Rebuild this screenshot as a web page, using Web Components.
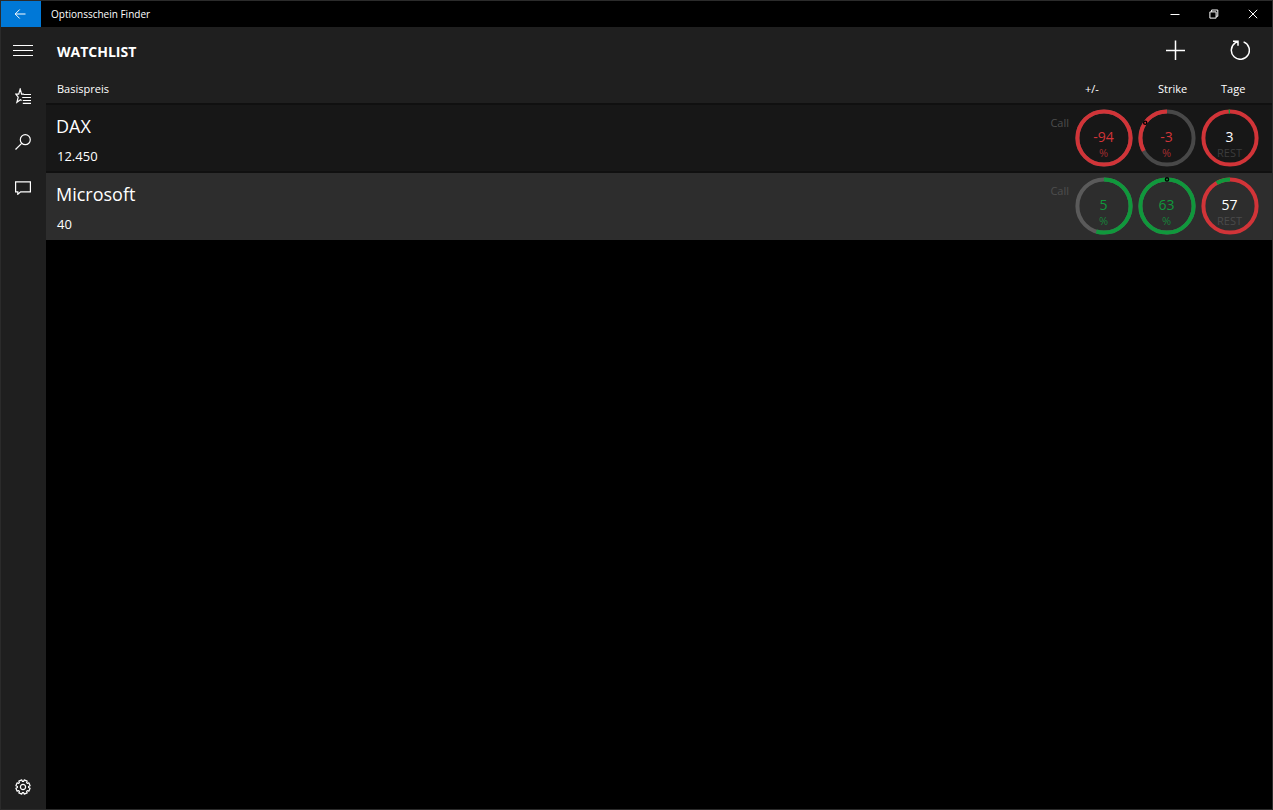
<!DOCTYPE html>
<html lang="de">
<head>
<meta charset="utf-8">
<title>Optionsschein Finder</title>
<style>
  html, body { margin: 0; height: 100%; background: #000; }
  body { font-family: "Open Sans", "Noto Sans", sans-serif; color: #fff; }
</style>
</head>
<body>
<finder-app>
  <title-bar slot="title">Optionsschein Finder</title-bar>
  <nav-pane slot="nav"></nav-pane>
  <page-header slot="main">Watchlist</page-header>
  <watch-list slot="main"></watch-list>
</finder-app>

<script>
const BUTTON = `
  *, *::before { box-sizing: border-box; }
  button { margin: 0; padding: 0; border: 0; background: none; color: inherit; font: inherit;
    display: flex; align-items: center; justify-content: center; }
  svg { display: block; fill: none; stroke: currentColor; }
`;

function define(name, html, setup) {
  const template = document.createElement('template');
  template.innerHTML = html;
  customElements.define(name, class extends HTMLElement {
    constructor() {
      super();
      this.attachShadow({ mode: 'open' }).append(template.content.cloneNode(true));
    }
    connectedCallback() { if (setup) setup(this, this.shadowRoot); }
  });
}

define('finder-app', `
  <style>
    :host { box-sizing: border-box; min-height: 100vh; display: grid;
      grid-template: auto 1fr / 45px 1fr; border: 1px solid #2b2b2b; background: #000; }
    ::slotted([slot="title"]) { grid-column: 1 / -1; }
    main { min-width: 0; }
  </style>
  <slot name="title"></slot>
  <slot name="nav"></slot>
  <main><slot name="main"></slot></main>
`);

define('title-bar', `
  <style>${BUTTON}
    :host { display: flex; align-items: stretch; height: 26px; background: #000; }
    .back { width: 40px; padding-right: 2px; background: #0078d7; }
    .name { flex: 1; padding-left: 10px; font-size: 10px; line-height: 26px; }
    .win { width: 39px; }
  </style>
  <button class="back" aria-label="Zurück"><svg width="12" height="12" viewBox="0 0 12 12"><path d="M11.5 6H1.2M5.7 1.5L1.2 6l4.5 4.5"/></svg></button>
  <span class="name"><slot></slot></span>
  <button class="win" aria-label="Minimieren"><svg width="10" height="10" viewBox="0 0 10 10"><path d="M.5 5.5h9"/></svg></button>
  <button class="win" aria-label="Verkleinern"><svg width="10" height="10" viewBox="0 0 10 10"><path d="M.9 2.9h6.2v6.2H.9zM2.6 2.8V1h6.2v6.3H7.2"/></svg></button>
  <button class="win" aria-label="Schließen"><svg width="10" height="10" viewBox="0 0 10 10"><path d="M.8.8l8.4 8.4M9.2.8L.8 9.2"/></svg></button>
`);

define('nav-pane', `
  <style>${BUTTON}
    :host { display: block; background: #1f1f1f; }
    nav { display: flex; flex-direction: column; height: 100%; }
    button { width: 44px; height: 46px; }
    svg { stroke-width: 1.2; }
    .end { height: 44px; margin-top: auto; }
  </style>
  <nav>
    <button aria-label="Menü"><svg width="20" height="12" viewBox="0 0 20 12"><path d="M0 1.5h20M0 6.5h20M0 11.5h20"/></svg></button>
    <button aria-label="Watchlist"><svg width="16" height="16" viewBox="0 0 16 16"><path d="M8.9 6.1H6.6L5.2 1 3.7 6.1H.8l2.4 3-1.3 5.2 3.5-2.6 1.2.9M8.6 6.5H16M7.2 9.5H16M7.8 12.5H16M7.8 15.3H16"/></svg></button>
    <button aria-label="Suche"><svg width="16" height="16" viewBox="0 0 16 16"><circle cx="10.3" cy="5.7" r="5"/><path d="M6.7 9.3L.5 15.5"/></svg></button>
    <button aria-label="Feedback"><svg width="16" height="14" viewBox="0 0 16 14"><path d="M.6.8h14.8v10.1H5.6L2.8 13.3v-2.4H.6z"/></svg></button>
    <button class="end" aria-label="Einstellungen"><svg class="gear" width="16" height="16" viewBox="-8 -8 16 16"><path stroke-linejoin="round"/><circle r="2.6"/></svg></button>
  </nav>
`, (host, root) => {
  // Eight teeth around the hub.
  const points = [];
  for (let i = 0; i < 8; i++) {
    for (const [offset, r] of [[-13, 7.2], [13, 7.2], [17, 5.6], [28, 5.6]]) {
      const a = (i * 45 + 22.5 + offset) * Math.PI / 180;
      points.push((r * Math.cos(a)).toFixed(2) + ' ' + (r * Math.sin(a)).toFixed(2));
    }
  }
  root.querySelector('.gear path').setAttribute('d', 'M' + points.join('L') + 'Z');
});

define('page-header', `
  <style>${BUTTON}
    :host { display: flex; align-items: center; height: 46px; background: #1f1f1f; }
    h1 { flex: 1; margin: 0; padding: 4px 0 0 11px; font-size: 14px; line-height: 20px; font-weight: 700;
      text-transform: uppercase; }
    button { width: 65px; height: 46px; }
    svg { stroke-width: 1.5; }
  </style>
  <h1><slot></slot></h1>
  <button aria-label="Hinzufügen"><svg width="20" height="20" viewBox="0 0 20 20"><path d="M10.5 .5v19.5M1 10.5h19"/></svg></button>
  <button aria-label="Aktualisieren"><svg width="20" height="20" viewBox="0 0 20 20"><path d="M13.6 1.9A9 9 0 1 1 5.2 2.9L8 1.3M3 1.2h5v4.6"/></svg></button>
`);

define('ring-gauge', `
  <style>
    :host { display: grid; place-items: center; }
    svg { display: block; grid-area: 1 / 1; fill: none; }
    circle { stroke-width: 4; }
    .mark { stroke: #000; stroke-width: 1.4; }
    .text { grid-area: 1 / 1; display: flex; flex-direction: column; align-items: center; padding-top: 11px; }
    .value { font-size: 14px; line-height: 18px; color: var(--value); }
    .unit { font-size: 11px; line-height: 14px; color: var(--unit); }
  </style>
  <svg width="58" height="58" viewBox="-29 -29 58 58" aria-hidden="true">
    <g transform="rotate(-90)"><circle class="track" r="26.6"/><circle class="arc" r="26.6" pathLength="360"/></g>
    <circle class="mark" r="1.6"/>
  </svg>
  <div class="text"><span class="value"></span><span class="unit"></span></div>
`, (host, root) => {
  const get = name => host.getAttribute(name);
  const [from, to] = get('arc').split(' ').map(Number);
  const arc = root.querySelector('.arc');
  arc.setAttribute('stroke', get('color'));
  if (to - from < 360) {
    arc.setAttribute('stroke-dasharray', (to - from) + ' ' + (360 - to + from));
    arc.setAttribute('stroke-dashoffset', -from);
  }
  root.querySelector('.track').setAttribute('stroke', get('track'));
  const mark = root.querySelector('.mark');
  if (host.hasAttribute('mark')) {
    const a = get('mark') * Math.PI / 180;
    mark.setAttribute('cx', 26.6 * Math.sin(a));
    mark.setAttribute('cy', -26.6 * Math.cos(a));
  } else mark.remove();
  root.querySelector('.value').textContent = get('value');
  root.querySelector('.unit').textContent = get('unit');
});

const RED = '#d13438', GREEN = '#10983c';
const ROWS = [
  { name: 'DAX', base: '12.450', kind: 'Call', gauges: [
    { value: '-94', unit: '%', color: RED, track: '#484848', arc: '0 360', text: RED, sub: '#a32d30' },
    { value: '-3', unit: '%', color: RED, track: '#484848', arc: '241 360', mark: 305, text: RED, sub: '#a32d30' },
    { value: '3', unit: 'REST', color: GREEN, track: RED, arc: '357 360', text: '#fff', sub: '#3c3c3c' } ] },
  { name: 'Microsoft', base: '40', kind: 'Call', gauges: [
    { value: '5', unit: '%', color: GREEN, track: '#5a5a5a', arc: '0 197', text: GREEN, sub: '#17823a' },
    { value: '63', unit: '%', color: GREEN, track: '#5a5a5a', arc: '0 360', mark: 0, text: GREEN, sub: '#17823a' },
    { value: '57', unit: 'REST', color: GREEN, track: RED, arc: '330 360', text: '#fff', sub: '#4a4a4a' } ] },
];

define('watch-list', `
  <style>
    :host { display: block; }
    table { width: 100%; table-layout: fixed; border-collapse: separate; border-spacing: 0; }
    th, td { padding: 0; text-align: left; font-weight: 400; }
    .kind { width: 40px; }
    .gauge { width: 63px; }
    .edge { width: 11px; }
    thead tr { background: #1f1f1f; }
    thead th { box-sizing: border-box; height: 32px; padding-top: 2px; font-size: 11px; line-height: 28px;
      border-bottom: 2px solid #101010; }
    thead .base { padding-left: 11px; }
    thead .gauge { padding-left: 23px; }
    thead .change { padding-left: 13px; }
    tbody tr { background: #171717; }
    tbody tr:nth-child(even) { background: #2d2d2d; }
    tbody th, tbody td { height: 66px; vertical-align: top; border-bottom: 2px solid #101010; }
    tbody tr:last-child > * { border-bottom: 1px solid #2d2d2d; }
    .name { display: block; padding: 7px 0 0 10px; font-size: 18px; line-height: 28px; }
    .price { display: block; padding: 6px 0 0 11px; font-size: 13px; line-height: 20px; }
    tbody .kind { padding-top: 10px; height: 56px; font-size: 11px; line-height: 16px; text-align: right; color: #4d4d4d; }
    tbody .kind span { padding-right: 3px; }
    ring-gauge { padding-top: 4px; }
  </style>
  <table>
    <thead><tr>
      <th class="base" scope="col">Basispreis</th><th class="kind"></th>
      <th class="gauge change" scope="col">+/-</th><th class="gauge" scope="col">Strike</th><th class="gauge" scope="col">Tage</th>
      <th class="edge"></th>
    </tr></thead>
    <tbody></tbody>
  </table>
`, (host, root) => {
  root.querySelector('tbody').innerHTML = ROWS.map(row => `<tr>
    <th scope="row"><span class="name">${row.name}</span><span class="price">${row.base}</span></th>
    <td class="kind"><span>${row.kind}</span></td>
    ${row.gauges.map(g => `<td><ring-gauge value="${g.value}" unit="${g.unit}" color="${g.color}" track="${g.track}"
      arc="${g.arc}" ${'mark' in g ? `mark="${g.mark}"` : ''} style="--value:${g.text};--unit:${g.sub}"></ring-gauge></td>`).join('')}
    <td></td></tr>`).join('');
});
</script>
</body>
</html>
